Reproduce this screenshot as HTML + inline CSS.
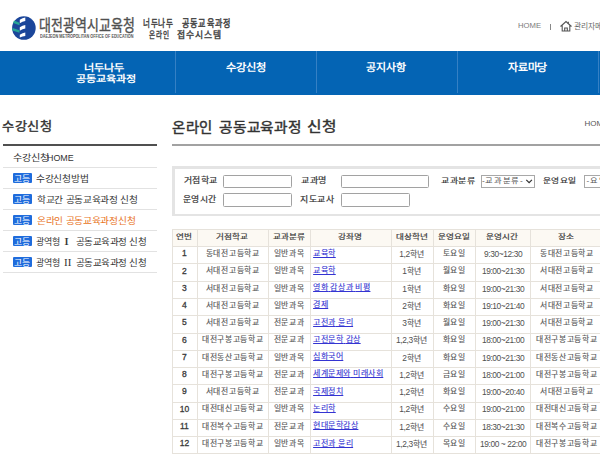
<!DOCTYPE html>
<html lang="zh-CN"><head><meta charset="utf-8"><style>
html,body{margin:0;padding:0;background:#fff;width:600px;height:473px;overflow:hidden;position:relative;font-family:'Liberation Sans',sans-serif;}
.ab{position:absolute;white-space:nowrap;line-height:1;}
.nav{position:absolute;left:0;top:51px;width:600px;height:44px;background:#0464b4;}
.dv{position:absolute;top:51px;width:1px;height:42px;background:#3580c4;}
.sl{position:absolute;left:3px;width:154px;height:1px;background:#e2e2e2;}
.bd{position:absolute;left:13px;width:19.3px;height:9.5px;background:#1f6cdc;border-radius:1px;}
.in{position:absolute;box-sizing:border-box;border:1px solid #a2a2a2;border-radius:1.5px;background:#fff;height:13.6px;}
.tl{position:absolute;background:#e6e2db;}
.tc{position:absolute;color:#555;-webkit-text-stroke:0.12px #555;font-size:7.5px;line-height:1;white-space:nowrap;text-align:center;}
.th{position:absolute;color:#3a3a3a;-webkit-text-stroke:0.22px #3a3a3a;font-size:8px;line-height:1;white-space:nowrap;text-align:center;}
.lk{color:#3434d2;-webkit-text-stroke:0.1px #3434d2;text-decoration:underline;}
</style></head><body>

<svg class="ab" style="left:8px;top:12px" width="32" height="32" viewBox="8 12 32 32">
<circle cx="23.9" cy="28.05" r="11.8" fill="#1b469a"/>
<path d="M19.8 19.7 Q22.5 17.7 25.3 17.5 L25.3 21.1 Q22.5 21.3 19.8 23.2 Z" fill="#fff"/>
<path d="M19.8 27.2 Q22.5 25.2 25.3 25.0 L25.3 28.6 Q22.5 28.8 19.8 30.7 Z" fill="#fff"/>
<path d="M19.8 34.7 Q22.5 32.7 25.3 32.5 L25.3 36.1 Q22.5 36.3 19.8 37.6 Z" fill="#fff"/>
<path d="M14.0 20.6 L19.5 22.8 L19.5 25.2 L13.2 23.0 Z" fill="#26a595"/>
<path d="M12.6 28.0 L19.5 30.2 L19.5 32.8 L12.4 30.6 Z" fill="#26a595"/>
</svg>
<div class="ab" style="left:550px;top:24px;width:1px;height:6px;background:#888"></div>
<svg class="ab" style="left:559px;top:20px" width="14" height="12" viewBox="0 0 14 12">
<path d="M1.5 6.5 L7 1.5 L12.5 6.5 M3.2 5.2 V11 H10.8 V5.2 M5.7 11 V8 H8.3 V11" fill="none" stroke="#555" stroke-width="1.1"/><path d="M9.3 1.8 V3.6" stroke="#555" stroke-width="1.2"/>
</svg>
<div class="nav"></div>
<div class="dv" style="left:175px"></div>
<div class="dv" style="left:316px"></div>
<div class="dv" style="left:457px"></div>
<div class="dv" style="left:598px"></div>
<div class="ab" style="left:3px;top:144px;width:154px;height:2px;background:#505050"></div>
<div class="sl" style="top:167px"></div>
<div class="sl" style="top:188px"></div>
<div class="sl" style="top:209px"></div>
<div class="sl" style="top:230px"></div>
<div class="sl" style="top:251px"></div>
<div class="sl" style="top:272px"></div>
<div class="bd" style="top:173px"></div>
<div class="bd" style="top:194px"></div>
<div class="bd" style="top:215px"></div>
<div class="bd" style="top:236px"></div>
<div class="bd" style="top:257px"></div>
<div class="ab" style="left:172px;top:144px;width:428px;height:2px;background:#a2a2a2"></div>
<div class="ab" style="left:172px;top:166px;width:440px;height:50px;box-sizing:border-box;border:3px solid #e4e4e4;border-bottom-width:2px;background:#fff"></div>
<div class="in" style="left:223px;top:174.9px;width:68.5px"></div>
<div class="in" style="left:223px;top:193.3px;width:68.5px"></div>
<div class="in" style="left:341.2px;top:174.9px;width:87.5px"></div>
<div class="in" style="left:341.2px;top:193.3px;width:68.5px"></div>
<div class="in" style="left:481px;top:175px;width:54.3px;height:13px;border-radius:0;border-color:#a8a8a8"></div>
<svg class="ab" style="left:525px;top:178px" width="8" height="6" viewBox="0 0 8 6"><path d="M1.3 1.9 L4.1 4.6 L6.9 1.9" fill="none" stroke="#333" stroke-width="1.25"/></svg>
<div class="in" style="left:584.3px;top:175px;width:40px;height:13px;border-radius:0;border-color:#a8a8a8"></div>
<div class="ab" style="left:39.40px;top:18.47px;font-size:14px;color:#505050;-webkit-text-stroke:0.35px #505050;transform-origin:0 0;transform:scale(0.9238,1.0989);">대전광역시교육청</div>
<div class="ab" style="left:40.37px;top:35.40px;font-size:4.5px;color:#555;font-weight:bold;transform-origin:0 0;transform:scale(0.8381,1.0329);">DAEJEON METROPOLITAN OFFICE OF EDUCATION</div>
<div class="ab" style="left:142.94px;top:19.32px;font-size:10px;color:#444;-webkit-text-stroke:0.45px #444;letter-spacing:1.2px;transform-origin:0 0;transform:scale(0.7532,1.0165);">너두나두</div>
<div class="ab" style="left:182.03px;top:19.15px;font-size:10px;color:#444;-webkit-text-stroke:0.45px #444;letter-spacing:1.2px;transform-origin:0 0;transform:scale(0.8067,1.0165);">공동교육과정</div>
<div class="ab" style="left:148.60px;top:30.69px;font-size:10px;color:#444;-webkit-text-stroke:0.45px #444;letter-spacing:1.2px;transform-origin:0 0;transform:scale(0.6632,0.9341);">온라인</div>
<div class="ab" style="left:176.68px;top:30.93px;font-size:10px;color:#444;-webkit-text-stroke:0.45px #444;letter-spacing:1.2px;transform-origin:0 0;transform:scale(0.8821,0.9341);">접수시스템</div>
<div class="ab" style="left:517.70px;top:22.03px;font-size:8px;color:#7a7a7a;transform-origin:0 0;transform:scale(0.9592,0.9859);">HOME</div>
<div class="ab" style="left:573.83px;top:22.97px;font-size:7.8px;color:#6a6a6a;transform-origin:0 0;transform:scale(1.0000,0.9580);">관리자메뉴</div>
<div class="ab" style="left:84.36px;top:63.75px;font-size:10px;color:#fff;font-weight:bold;transform-origin:0 0;transform:scale(1.1148,0.9368);">너두나두</div>
<div class="ab" style="left:75.55px;top:74.69px;font-size:10px;color:#fff;font-weight:bold;transform-origin:0 0;transform:scale(1.1087,0.8842);">공동교육과정</div>
<div class="ab" style="left:225.69px;top:62.67px;font-size:10px;color:#fff;font-weight:bold;transform-origin:0 0;transform:scale(1.1215,0.9789);">수강신청</div>
<div class="ab" style="left:366.01px;top:62.95px;font-size:10px;color:#fff;font-weight:bold;transform-origin:0 0;transform:scale(1.0937,0.9687);">공지사항</div>
<div class="ab" style="left:508.00px;top:62.82px;font-size:10px;color:#fff;font-weight:bold;transform-origin:0 0;transform:scale(1.0877,0.9789);">자료마당</div>
<div class="ab" style="left:2.14px;top:121.08px;font-size:12.5px;color:#333;-webkit-text-stroke:0.4px #333;transform-origin:0 0;transform:scale(1.0575,0.9758);">수강신청</div>
<div class="ab" style="left:13.16px;top:154.24px;font-size:9px;color:#333;transform-origin:0 0;transform:scale(1.1301,0.9646);">수강신청</div>
<div class="ab" style="left:47.36px;top:152.62px;font-size:9px;color:#333;transform-origin:0 0;transform:scale(0.9877,1.0955);">HOME</div>
<div class="ab" style="left:14.09px;top:174.63px;font-size:8px;color:#fff;transform-origin:0 0;transform:scale(1.1027,1.0938);">고등</div>
<div class="ab" style="left:36.33px;top:174.72px;font-size:9px;color:#333;transform-origin:0 0;transform:scale(1.0883,0.9890);">수강신청방법</div>
<div class="ab" style="left:14.09px;top:195.63px;font-size:8px;color:#fff;transform-origin:0 0;transform:scale(1.1027,1.0938);">고등</div>
<div class="ab" style="left:37.13px;top:195.79px;font-size:9px;color:#333;transform-origin:0 0;transform:scale(1.0794,0.9783);">학교간 공동교육과정 신청</div>
<div class="ab" style="left:14.09px;top:216.63px;font-size:8px;color:#fff;transform-origin:0 0;transform:scale(1.1027,1.0938);">고등</div>
<div class="ab" style="left:37.02px;top:216.72px;font-size:9px;color:#e8731c;transform-origin:0 0;transform:scale(1.0850,0.9890);">온라인 공동교육과정신청</div>
<div class="ab" style="left:14.09px;top:237.63px;font-size:8px;color:#fff;transform-origin:0 0;transform:scale(1.1027,1.0938);">고등</div>
<div class="ab" style="left:36.14px;top:237.82px;font-size:9px;color:#333;transform-origin:0 0;transform:scale(1.0000,0.9783);">광역형</div>
<div class="ab" style="left:64.46px;top:237.71px;font-size:9px;color:#333;font-family:'Liberation Serif',serif;transform-origin:0 0;transform:scale(1.6872,1.0438);">I</div>
<div class="ab" style="left:75.69px;top:237.69px;font-size:9px;color:#333;transform-origin:0 0;transform:scale(1.0576,0.9890);">공동교육과정 신청</div>
<div class="ab" style="left:14.09px;top:258.63px;font-size:8px;color:#fff;transform-origin:0 0;transform:scale(1.1027,1.0938);">고등</div>
<div class="ab" style="left:36.14px;top:258.82px;font-size:9px;color:#333;transform-origin:0 0;transform:scale(1.0000,0.9783);">광역형</div>
<div class="ab" style="left:63.70px;top:258.71px;font-size:9px;color:#333;font-family:'Liberation Serif',serif;transform-origin:0 0;transform:scale(1.2222,1.0438);">II</div>
<div class="ab" style="left:75.69px;top:258.69px;font-size:9px;color:#333;transform-origin:0 0;transform:scale(1.0576,0.9890);">공동교육과정 신청</div>
<div class="ab" style="left:172.25px;top:120.51px;font-size:12.8px;color:#333;-webkit-text-stroke:0.4px #333;transform-origin:0 0;transform:scale(1.1255,1.0646);">온라인</div>
<div class="ab" style="left:218.93px;top:120.52px;font-size:12.8px;color:#333;-webkit-text-stroke:0.4px #333;transform-origin:0 0;transform:scale(1.1463,1.0646);">공동교육과정</div>
<div class="ab" style="left:307.31px;top:120.48px;font-size:12.8px;color:#333;-webkit-text-stroke:0.4px #333;transform-origin:0 0;transform:scale(1.2331,1.0646);">신청</div>
<div class="ab" style="left:584.49px;top:120.23px;font-size:8px;color:#555;transform-origin:0 0;transform:scale(1.0000,0.9331);">HOME</div>
<div class="ab" style="left:183.72px;top:175.98px;font-size:8.4px;color:#333;-webkit-text-stroke:0.2px #333;transform-origin:0 0;transform:scale(1.0608,0.9446);">거점학교</div>
<div class="ab" style="left:183.49px;top:195.08px;font-size:8.4px;color:#333;-webkit-text-stroke:0.2px #333;transform-origin:0 0;transform:scale(1.0549,0.9550);">운영시간</div>
<div class="ab" style="left:300.79px;top:175.71px;font-size:8.4px;color:#333;-webkit-text-stroke:0.2px #333;transform-origin:0 0;transform:scale(1.0848,0.9288);">교과명</div>
<div class="ab" style="left:300.24px;top:194.60px;font-size:8.4px;color:#333;-webkit-text-stroke:0.2px #333;transform-origin:0 0;transform:scale(1.0648,0.9550);">지도교사</div>
<div class="ab" style="left:440.60px;top:177.05px;font-size:8.4px;color:#333;-webkit-text-stroke:0.2px #333;transform-origin:0 0;transform:scale(1.0708,0.8634);">교과분류</div>
<div class="ab" style="left:482.16px;top:177.79px;font-size:8.2px;color:#555;letter-spacing:0.6px;transform-origin:0 0;transform:scale(1.0088,0.8175);">-교과분류-</div>
<div class="ab" style="left:543.38px;top:177.33px;font-size:8.4px;color:#333;-webkit-text-stroke:0.2px #333;transform-origin:0 0;transform:scale(1.0421,0.8634);">운영요일</div>
<div class="ab" style="left:586.59px;top:177.97px;font-size:8.2px;color:#555;letter-spacing:0.6px;transform-origin:0 0;transform:scale(1.0000,0.8266);">-요일-</div>
<div class="ab" style="left:172.2px;top:228.9px;width:429.8px;height:17.27px;background:#fcf9f3"></div>
<div class="tl" style="left:172.2px;top:228.90px;width:449.8px;height:1px"></div>
<div class="tl" style="left:172.2px;top:246.17px;width:449.8px;height:1px"></div>
<div class="tl" style="left:172.2px;top:263.44px;width:449.8px;height:1px"></div>
<div class="tl" style="left:172.2px;top:280.71px;width:449.8px;height:1px"></div>
<div class="tl" style="left:172.2px;top:297.98px;width:449.8px;height:1px"></div>
<div class="tl" style="left:172.2px;top:315.25px;width:449.8px;height:1px"></div>
<div class="tl" style="left:172.2px;top:332.52px;width:449.8px;height:1px"></div>
<div class="tl" style="left:172.2px;top:349.79px;width:449.8px;height:1px"></div>
<div class="tl" style="left:172.2px;top:367.06px;width:449.8px;height:1px"></div>
<div class="tl" style="left:172.2px;top:384.33px;width:449.8px;height:1px"></div>
<div class="tl" style="left:172.2px;top:401.60px;width:449.8px;height:1px"></div>
<div class="tl" style="left:172.2px;top:418.87px;width:449.8px;height:1px"></div>
<div class="tl" style="left:172.2px;top:436.14px;width:449.8px;height:1px"></div>
<div class="tl" style="left:172.2px;top:453.41px;width:449.8px;height:1px"></div>
<div class="tl" style="left:172.2px;top:228.9px;width:1px;height:224.51px"></div>
<div class="tl" style="left:196.7px;top:228.9px;width:1px;height:224.51px"></div>
<div class="tl" style="left:267.5px;top:228.9px;width:1px;height:224.51px"></div>
<div class="tl" style="left:309.5px;top:228.9px;width:1px;height:224.51px"></div>
<div class="tl" style="left:390.5px;top:228.9px;width:1px;height:224.51px"></div>
<div class="tl" style="left:432.6px;top:228.9px;width:1px;height:224.51px"></div>
<div class="tl" style="left:474.6px;top:228.9px;width:1px;height:224.51px"></div>
<div class="tl" style="left:530.4px;top:228.9px;width:1px;height:224.51px"></div>
<div class="tl" style="left:602px;top:228.9px;width:1px;height:224.51px"></div>
<div class="th" style="left:172.2px;width:24.5px;top:232.89px;font-size:8.6px;transform-origin:50% 0;transform:scaleY(0.82)">연번</div>
<div class="th" style="left:196.7px;width:70.80000000000001px;top:232.89px;font-size:8.6px;transform-origin:50% 0;transform:scaleY(0.82)">거점학교</div>
<div class="th" style="left:267.5px;width:42.0px;top:232.89px;font-size:8.6px;transform-origin:50% 0;transform:scaleY(0.82)">교과분류</div>
<div class="th" style="left:309.5px;width:81.0px;top:232.89px;font-size:8.6px;transform-origin:50% 0;transform:scaleY(0.82)">강좌명</div>
<div class="th" style="left:390.5px;width:42.10000000000002px;top:232.89px;font-size:8.6px;transform-origin:50% 0;transform:scaleY(0.82)">대상학년</div>
<div class="th" style="left:432.6px;width:42.0px;top:232.89px;font-size:8.6px;transform-origin:50% 0;transform:scaleY(0.82)">운영요일</div>
<div class="th" style="left:474.6px;width:55.799999999999955px;top:232.89px;font-size:8.6px;transform-origin:50% 0;transform:scaleY(0.82)">운영시간</div>
<div class="th" style="left:530.4px;width:71.60000000000002px;top:232.89px;font-size:8.6px;transform-origin:50% 0;transform:scaleY(0.82)">장소</div>
<div class="tc" style="left:172.2px;width:24.5px;top:249.31px;font-size:8.5px;color:#3a3a3a;-webkit-text-stroke:0.3px #3a3a3a">1</div>
<div class="tc" style="left:197.30px;width:70.80000000000001px;top:250.02px;font-size:7.8px"><span style="letter-spacing:0.7px">동대전고등학교</span></div>
<div class="tc" style="left:268.10px;width:42.0px;top:250.02px;font-size:7.8px"><span style="letter-spacing:0.7px">일반과목</span></div>
<div class="tc" style="left:313.1px;text-align:left;top:249.57px;font-size:8px"><span class="lk"><span style="letter-spacing:0.55px">교육학</span></span></div>
<div class="tc" style="left:391.10px;width:42.10000000000002px;top:250.02px;font-size:7.8px"><span style="font-size:8.4px;letter-spacing:-0.4px;vertical-align:-0.1px;-webkit-text-stroke-width:0;color:#505050">1,2</span><span style="letter-spacing:0.7px">학년</span></div>
<div class="tc" style="left:433.20px;width:42.0px;top:250.02px;font-size:7.8px"><span style="letter-spacing:0.7px">토요일</span></div>
<div class="tc" style="left:475.20px;width:55.799999999999955px;top:250.02px;font-size:7.8px"><span style="font-size:8.4px;letter-spacing:-0.4px;vertical-align:-0.1px;-webkit-text-stroke-width:0;color:#505050">9:30~12:30</span></div>
<div class="tc" style="left:531.00px;width:71.60000000000002px;top:250.02px;font-size:7.8px"><span style="letter-spacing:0.7px">동대전고등학교</span></div>
<div class="tc" style="left:172.2px;width:24.5px;top:266.58px;font-size:8.5px;color:#3a3a3a;-webkit-text-stroke:0.3px #3a3a3a">2</div>
<div class="tc" style="left:197.30px;width:70.80000000000001px;top:267.29px;font-size:7.8px"><span style="letter-spacing:0.7px">서대전고등학교</span></div>
<div class="tc" style="left:268.10px;width:42.0px;top:267.29px;font-size:7.8px"><span style="letter-spacing:0.7px">일반과목</span></div>
<div class="tc" style="left:313.1px;text-align:left;top:266.84px;font-size:8px"><span class="lk"><span style="letter-spacing:0.55px">교육학</span></span></div>
<div class="tc" style="left:391.10px;width:42.10000000000002px;top:267.29px;font-size:7.8px"><span style="font-size:8.4px;letter-spacing:-0.4px;vertical-align:-0.1px;-webkit-text-stroke-width:0;color:#505050">1</span><span style="letter-spacing:0.7px">학년</span></div>
<div class="tc" style="left:433.20px;width:42.0px;top:267.29px;font-size:7.8px"><span style="letter-spacing:0.7px">월요일</span></div>
<div class="tc" style="left:475.20px;width:55.799999999999955px;top:267.29px;font-size:7.8px"><span style="font-size:8.4px;letter-spacing:-0.4px;vertical-align:-0.1px;-webkit-text-stroke-width:0;color:#505050">19:00~21:30</span></div>
<div class="tc" style="left:531.00px;width:71.60000000000002px;top:267.29px;font-size:7.8px"><span style="letter-spacing:0.7px">서대전고등학교</span></div>
<div class="tc" style="left:172.2px;width:24.5px;top:283.85px;font-size:8.5px;color:#3a3a3a;-webkit-text-stroke:0.3px #3a3a3a">3</div>
<div class="tc" style="left:197.30px;width:70.80000000000001px;top:284.56px;font-size:7.8px"><span style="letter-spacing:0.7px">서대전고등학교</span></div>
<div class="tc" style="left:268.10px;width:42.0px;top:284.56px;font-size:7.8px"><span style="letter-spacing:0.7px">일반과목</span></div>
<div class="tc" style="left:313.1px;text-align:left;top:284.11px;font-size:8px"><span class="lk"><span style="letter-spacing:0.55px">영화</span> <span style="letter-spacing:0.55px">감상과</span> <span style="letter-spacing:0.55px">비평</span></span></div>
<div class="tc" style="left:391.10px;width:42.10000000000002px;top:284.56px;font-size:7.8px"><span style="font-size:8.4px;letter-spacing:-0.4px;vertical-align:-0.1px;-webkit-text-stroke-width:0;color:#505050">1</span><span style="letter-spacing:0.7px">학년</span></div>
<div class="tc" style="left:433.20px;width:42.0px;top:284.56px;font-size:7.8px"><span style="letter-spacing:0.7px">화요일</span></div>
<div class="tc" style="left:475.20px;width:55.799999999999955px;top:284.56px;font-size:7.8px"><span style="font-size:8.4px;letter-spacing:-0.4px;vertical-align:-0.1px;-webkit-text-stroke-width:0;color:#505050">19:00~21:30</span></div>
<div class="tc" style="left:531.00px;width:71.60000000000002px;top:284.56px;font-size:7.8px"><span style="letter-spacing:0.7px">서대전고등학교</span></div>
<div class="tc" style="left:172.2px;width:24.5px;top:301.12px;font-size:8.5px;color:#3a3a3a;-webkit-text-stroke:0.3px #3a3a3a">4</div>
<div class="tc" style="left:197.30px;width:70.80000000000001px;top:301.83px;font-size:7.8px"><span style="letter-spacing:0.7px">서대전고등학교</span></div>
<div class="tc" style="left:268.10px;width:42.0px;top:301.83px;font-size:7.8px"><span style="letter-spacing:0.7px">일반과목</span></div>
<div class="tc" style="left:313.1px;text-align:left;top:301.38px;font-size:8px"><span class="lk"><span style="letter-spacing:0.55px">경제</span></span></div>
<div class="tc" style="left:391.10px;width:42.10000000000002px;top:301.83px;font-size:7.8px"><span style="font-size:8.4px;letter-spacing:-0.4px;vertical-align:-0.1px;-webkit-text-stroke-width:0;color:#505050">2</span><span style="letter-spacing:0.7px">학년</span></div>
<div class="tc" style="left:433.20px;width:42.0px;top:301.83px;font-size:7.8px"><span style="letter-spacing:0.7px">화요일</span></div>
<div class="tc" style="left:475.20px;width:55.799999999999955px;top:301.83px;font-size:7.8px"><span style="font-size:8.4px;letter-spacing:-0.4px;vertical-align:-0.1px;-webkit-text-stroke-width:0;color:#505050">19:10~21:40</span></div>
<div class="tc" style="left:531.00px;width:71.60000000000002px;top:301.83px;font-size:7.8px"><span style="letter-spacing:0.7px">서대전고등학교</span></div>
<div class="tc" style="left:172.2px;width:24.5px;top:318.39px;font-size:8.5px;color:#3a3a3a;-webkit-text-stroke:0.3px #3a3a3a">5</div>
<div class="tc" style="left:197.30px;width:70.80000000000001px;top:319.10px;font-size:7.8px"><span style="letter-spacing:0.7px">서대전고등학교</span></div>
<div class="tc" style="left:268.10px;width:42.0px;top:319.10px;font-size:7.8px"><span style="letter-spacing:0.7px">전문교과</span></div>
<div class="tc" style="left:313.1px;text-align:left;top:318.65px;font-size:8px"><span class="lk"><span style="letter-spacing:0.55px">고전과</span> <span style="letter-spacing:0.55px">윤리</span></span></div>
<div class="tc" style="left:391.10px;width:42.10000000000002px;top:319.10px;font-size:7.8px"><span style="font-size:8.4px;letter-spacing:-0.4px;vertical-align:-0.1px;-webkit-text-stroke-width:0;color:#505050">3</span><span style="letter-spacing:0.7px">학년</span></div>
<div class="tc" style="left:433.20px;width:42.0px;top:319.10px;font-size:7.8px"><span style="letter-spacing:0.7px">월요일</span></div>
<div class="tc" style="left:475.20px;width:55.799999999999955px;top:319.10px;font-size:7.8px"><span style="font-size:8.4px;letter-spacing:-0.4px;vertical-align:-0.1px;-webkit-text-stroke-width:0;color:#505050">19:00~21:30</span></div>
<div class="tc" style="left:531.00px;width:71.60000000000002px;top:319.10px;font-size:7.8px"><span style="letter-spacing:0.7px">서대전고등학교</span></div>
<div class="tc" style="left:172.2px;width:24.5px;top:335.66px;font-size:8.5px;color:#3a3a3a;-webkit-text-stroke:0.3px #3a3a3a">6</div>
<div class="tc" style="left:197.30px;width:70.80000000000001px;top:336.37px;font-size:7.8px"><span style="letter-spacing:0.7px">대전구봉고등학교</span></div>
<div class="tc" style="left:268.10px;width:42.0px;top:336.37px;font-size:7.8px"><span style="letter-spacing:0.7px">전문교과</span></div>
<div class="tc" style="left:313.1px;text-align:left;top:335.92px;font-size:8px"><span class="lk"><span style="letter-spacing:0.55px">고전문학</span> <span style="letter-spacing:0.55px">감상</span></span></div>
<div class="tc" style="left:391.10px;width:42.10000000000002px;top:336.37px;font-size:7.8px"><span style="font-size:8.4px;letter-spacing:-0.4px;vertical-align:-0.1px;-webkit-text-stroke-width:0;color:#505050">1,2,3</span><span style="letter-spacing:0.7px">학년</span></div>
<div class="tc" style="left:433.20px;width:42.0px;top:336.37px;font-size:7.8px"><span style="letter-spacing:0.7px">화요일</span></div>
<div class="tc" style="left:475.20px;width:55.799999999999955px;top:336.37px;font-size:7.8px"><span style="font-size:8.4px;letter-spacing:-0.4px;vertical-align:-0.1px;-webkit-text-stroke-width:0;color:#505050">18:00~21:00</span></div>
<div class="tc" style="left:531.00px;width:71.60000000000002px;top:336.37px;font-size:7.8px"><span style="letter-spacing:0.7px">대전구봉고등학교</span></div>
<div class="tc" style="left:172.2px;width:24.5px;top:352.93px;font-size:8.5px;color:#3a3a3a;-webkit-text-stroke:0.3px #3a3a3a">7</div>
<div class="tc" style="left:197.30px;width:70.80000000000001px;top:353.64px;font-size:7.8px"><span style="letter-spacing:0.7px">대전동산고등학교</span></div>
<div class="tc" style="left:268.10px;width:42.0px;top:353.64px;font-size:7.8px"><span style="letter-spacing:0.7px">일반과목</span></div>
<div class="tc" style="left:313.1px;text-align:left;top:353.19px;font-size:8px"><span class="lk"><span style="letter-spacing:0.55px">심화국어</span></span></div>
<div class="tc" style="left:391.10px;width:42.10000000000002px;top:353.64px;font-size:7.8px"><span style="font-size:8.4px;letter-spacing:-0.4px;vertical-align:-0.1px;-webkit-text-stroke-width:0;color:#505050">2</span><span style="letter-spacing:0.7px">학년</span></div>
<div class="tc" style="left:433.20px;width:42.0px;top:353.64px;font-size:7.8px"><span style="letter-spacing:0.7px">화요일</span></div>
<div class="tc" style="left:475.20px;width:55.799999999999955px;top:353.64px;font-size:7.8px"><span style="font-size:8.4px;letter-spacing:-0.4px;vertical-align:-0.1px;-webkit-text-stroke-width:0;color:#505050">19:00~21:30</span></div>
<div class="tc" style="left:531.00px;width:71.60000000000002px;top:353.64px;font-size:7.8px"><span style="letter-spacing:0.7px">대전동산고등학교</span></div>
<div class="tc" style="left:172.2px;width:24.5px;top:370.20px;font-size:8.5px;color:#3a3a3a;-webkit-text-stroke:0.3px #3a3a3a">8</div>
<div class="tc" style="left:197.30px;width:70.80000000000001px;top:370.91px;font-size:7.8px"><span style="letter-spacing:0.7px">대전구봉고등학교</span></div>
<div class="tc" style="left:268.10px;width:42.0px;top:370.91px;font-size:7.8px"><span style="letter-spacing:0.7px">전문교과</span></div>
<div class="tc" style="left:313.1px;text-align:left;top:370.46px;font-size:8px"><span class="lk"><span style="letter-spacing:0.55px">세계문제와</span> <span style="letter-spacing:0.55px">미래사회</span></span></div>
<div class="tc" style="left:391.10px;width:42.10000000000002px;top:370.91px;font-size:7.8px"><span style="font-size:8.4px;letter-spacing:-0.4px;vertical-align:-0.1px;-webkit-text-stroke-width:0;color:#505050">1,2</span><span style="letter-spacing:0.7px">학년</span></div>
<div class="tc" style="left:433.20px;width:42.0px;top:370.91px;font-size:7.8px"><span style="letter-spacing:0.7px">금요일</span></div>
<div class="tc" style="left:475.20px;width:55.799999999999955px;top:370.91px;font-size:7.8px"><span style="font-size:8.4px;letter-spacing:-0.4px;vertical-align:-0.1px;-webkit-text-stroke-width:0;color:#505050">18:00~21:00</span></div>
<div class="tc" style="left:531.00px;width:71.60000000000002px;top:370.91px;font-size:7.8px"><span style="letter-spacing:0.7px">대전구봉고등학교</span></div>
<div class="tc" style="left:172.2px;width:24.5px;top:387.47px;font-size:8.5px;color:#3a3a3a;-webkit-text-stroke:0.3px #3a3a3a">9</div>
<div class="tc" style="left:197.30px;width:70.80000000000001px;top:388.18px;font-size:7.8px"><span style="letter-spacing:0.7px">서대전고등학교</span></div>
<div class="tc" style="left:268.10px;width:42.0px;top:388.18px;font-size:7.8px"><span style="letter-spacing:0.7px">전문교과</span></div>
<div class="tc" style="left:313.1px;text-align:left;top:387.73px;font-size:8px"><span class="lk"><span style="letter-spacing:0.55px">국제정치</span></span></div>
<div class="tc" style="left:391.10px;width:42.10000000000002px;top:388.18px;font-size:7.8px"><span style="font-size:8.4px;letter-spacing:-0.4px;vertical-align:-0.1px;-webkit-text-stroke-width:0;color:#505050">1,2</span><span style="letter-spacing:0.7px">학년</span></div>
<div class="tc" style="left:433.20px;width:42.0px;top:388.18px;font-size:7.8px"><span style="letter-spacing:0.7px">화요일</span></div>
<div class="tc" style="left:475.20px;width:55.799999999999955px;top:388.18px;font-size:7.8px"><span style="font-size:8.4px;letter-spacing:-0.4px;vertical-align:-0.1px;-webkit-text-stroke-width:0;color:#505050">19:00~20:40</span></div>
<div class="tc" style="left:531.00px;width:71.60000000000002px;top:388.18px;font-size:7.8px"><span style="letter-spacing:0.7px">서대전고등학교</span></div>
<div class="tc" style="left:172.2px;width:24.5px;top:404.74px;font-size:8.5px;color:#3a3a3a;-webkit-text-stroke:0.3px #3a3a3a">10</div>
<div class="tc" style="left:197.30px;width:70.80000000000001px;top:405.45px;font-size:7.8px"><span style="letter-spacing:0.7px">대전대신고등학교</span></div>
<div class="tc" style="left:268.10px;width:42.0px;top:405.45px;font-size:7.8px"><span style="letter-spacing:0.7px">일반과목</span></div>
<div class="tc" style="left:313.1px;text-align:left;top:405.00px;font-size:8px"><span class="lk"><span style="letter-spacing:0.55px">논리학</span></span></div>
<div class="tc" style="left:391.10px;width:42.10000000000002px;top:405.45px;font-size:7.8px"><span style="font-size:8.4px;letter-spacing:-0.4px;vertical-align:-0.1px;-webkit-text-stroke-width:0;color:#505050">1,2</span><span style="letter-spacing:0.7px">학년</span></div>
<div class="tc" style="left:433.20px;width:42.0px;top:405.45px;font-size:7.8px"><span style="letter-spacing:0.7px">수요일</span></div>
<div class="tc" style="left:475.20px;width:55.799999999999955px;top:405.45px;font-size:7.8px"><span style="font-size:8.4px;letter-spacing:-0.4px;vertical-align:-0.1px;-webkit-text-stroke-width:0;color:#505050">19:00~21:00</span></div>
<div class="tc" style="left:531.00px;width:71.60000000000002px;top:405.45px;font-size:7.8px"><span style="letter-spacing:0.7px">대전대신고등학교</span></div>
<div class="tc" style="left:172.2px;width:24.5px;top:422.01px;font-size:8.5px;color:#3a3a3a;-webkit-text-stroke:0.3px #3a3a3a">11</div>
<div class="tc" style="left:197.30px;width:70.80000000000001px;top:422.72px;font-size:7.8px"><span style="letter-spacing:0.7px">대전복수고등학교</span></div>
<div class="tc" style="left:268.10px;width:42.0px;top:422.72px;font-size:7.8px"><span style="letter-spacing:0.7px">전문교과</span></div>
<div class="tc" style="left:313.1px;text-align:left;top:422.27px;font-size:8px"><span class="lk"><span style="letter-spacing:0.55px">현대문학감상</span></span></div>
<div class="tc" style="left:391.10px;width:42.10000000000002px;top:422.72px;font-size:7.8px"><span style="font-size:8.4px;letter-spacing:-0.4px;vertical-align:-0.1px;-webkit-text-stroke-width:0;color:#505050">1,2</span><span style="letter-spacing:0.7px">학년</span></div>
<div class="tc" style="left:433.20px;width:42.0px;top:422.72px;font-size:7.8px"><span style="letter-spacing:0.7px">수요일</span></div>
<div class="tc" style="left:475.20px;width:55.799999999999955px;top:422.72px;font-size:7.8px"><span style="font-size:8.4px;letter-spacing:-0.4px;vertical-align:-0.1px;-webkit-text-stroke-width:0;color:#505050">18:30~21:30</span></div>
<div class="tc" style="left:531.00px;width:71.60000000000002px;top:422.72px;font-size:7.8px"><span style="letter-spacing:0.7px">대전복수고등학교</span></div>
<div class="tc" style="left:172.2px;width:24.5px;top:439.28px;font-size:8.5px;color:#3a3a3a;-webkit-text-stroke:0.3px #3a3a3a">12</div>
<div class="tc" style="left:197.30px;width:70.80000000000001px;top:439.99px;font-size:7.8px"><span style="letter-spacing:0.7px">대전구봉고등학교</span></div>
<div class="tc" style="left:268.10px;width:42.0px;top:439.99px;font-size:7.8px"><span style="letter-spacing:0.7px">일반과목</span></div>
<div class="tc" style="left:313.1px;text-align:left;top:439.54px;font-size:8px"><span class="lk"><span style="letter-spacing:0.55px">고전과</span> <span style="letter-spacing:0.55px">윤리</span></span></div>
<div class="tc" style="left:391.10px;width:42.10000000000002px;top:439.99px;font-size:7.8px"><span style="font-size:8.4px;letter-spacing:-0.4px;vertical-align:-0.1px;-webkit-text-stroke-width:0;color:#505050">1,2,3</span><span style="letter-spacing:0.7px">학년</span></div>
<div class="tc" style="left:433.20px;width:42.0px;top:439.99px;font-size:7.8px"><span style="letter-spacing:0.7px">목요일</span></div>
<div class="tc" style="left:475.20px;width:55.799999999999955px;top:439.99px;font-size:7.8px"><span style="font-size:8.4px;letter-spacing:-0.4px;vertical-align:-0.1px;-webkit-text-stroke-width:0;color:#505050">19:00 ~ 22:00</span></div>
<div class="tc" style="left:531.00px;width:71.60000000000002px;top:439.99px;font-size:7.8px"><span style="letter-spacing:0.7px">대전구봉고등학교</span></div>
</body></html>
